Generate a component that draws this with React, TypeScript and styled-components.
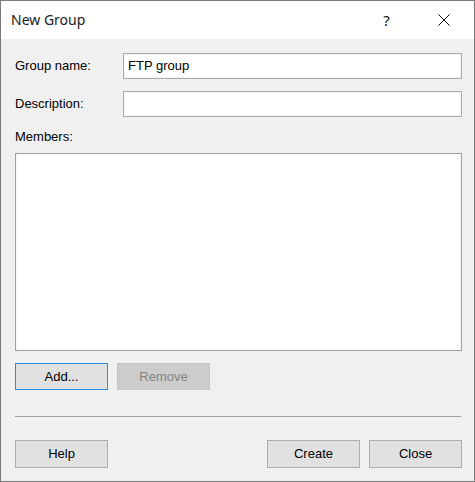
import React from "react";
import styled, { createGlobalStyle } from "styled-components";

const Global = createGlobalStyle`
  html, body { margin: 0; padding: 0; background: #ffffff; }
  body { font-family: "Liberation Sans", Arial, sans-serif; }
`;

const Window = styled.div`
  box-sizing: border-box;
  width: 475px;
  height: 482px;
  border: 1px solid #7a7a7a;
  display: flex;
  flex-direction: column;
  background: #f0f0f0;
`;

const TitleBar = styled.div`
  height: 38px;
  flex: none;
  background: #ffffff;
  display: flex;
  align-items: center;
  padding-left: 10px;
  padding-right: 2px;
`;

const Title = styled.div`
  flex: 1;
  font-family: "Noto Sans", "Open Sans", sans-serif;
  font-size: 14px;
  color: #1a1a1a;
  padding-bottom: 1px;
`;

const CaptionButton = styled.div`
  width: 57px;
  height: 38px;
  display: flex;
  align-items: center;
  justify-content: center;
  font-family: "Noto Sans", "Open Sans", sans-serif;
  font-size: 15px;
  color: #111;
`;

const Body = styled.div`
  flex: 1;
  display: flex;
  flex-direction: column;
  padding: 14px 12px 13px 14px;
`;

const FieldRow = styled.div<{ $gap?: number }>`
  display: grid;
  grid-template-columns: 108px 1fr;
  align-items: center;
  margin-top: ${(p) => p.$gap ?? 0}px;
`;

const Label = styled.label`
  font-size: 13px;
  color: #000;
  line-height: 16px;
`;

const TextBox = styled.div`
  box-sizing: border-box;
  height: 26px;
  background: #fff;
  border: 1px solid #acacac;
  box-shadow: inset 0 0 0 1px #f4f4f4;
  font-size: 13px;
  color: #000;
  padding: 4px 4px 0 4px;
  line-height: 16px;
`;

const MembersLabel = styled(Label)`
  display: block;
  margin-top: 12px;
  height: 16px;
`;

const ListBox = styled.div`
  box-sizing: border-box;
  margin-top: 8px;
  height: 198px;
  background: #fff;
  border: 1px solid #a0a0a0;
  box-shadow: inset 0 0 0 1px #f7f7f7;
`;

const ButtonRow = styled.div<{ $gap: number }>`
  display: flex;
  gap: 9px;
  margin-top: ${(p) => p.$gap}px;
`;

const Spacer = styled.div`
  flex: 1;
`;

const Button = styled.div<{ $h: number; $focus?: boolean; $disabled?: boolean }>`
  box-sizing: border-box;
  width: 93px;
  height: ${(p) => p.$h}px;
  display: flex;
  align-items: center;
  justify-content: center;
  font-size: 13px;
  background: ${(p) => (p.$disabled ? "#cccccc" : "#e1e1e1")};
  color: ${(p) => (p.$disabled ? "#838383" : "#000")};
  border-width: 1px;
  border-style: solid;
  border-color: ${(p) => (p.$focus ? "#2f8ae0" : p.$disabled ? "#c4c4c4" : "#adadad")};
  padding-bottom: 1px;
`;

const Separator = styled.div`
  margin-top: 26px;
  height: 1px;
  background: #a0a0a0;
  margin-right: 1px;
`;

export default function App() {
  return (
    <>
      <Global />
      <Window>
        <TitleBar>
          <Title>New Group</Title>
          <CaptionButton>?</CaptionButton>
          <CaptionButton>
            <svg width="12" height="12" viewBox="0 0 12 12">
              <path d="M0.5 0.5 L11.5 11.5 M11.5 0.5 L0.5 11.5" stroke="#111" strokeWidth="1" />
            </svg>
          </CaptionButton>
        </TitleBar>
        <Body>
          <FieldRow>
            <Label>Group name:</Label>
            <TextBox>FTP group</TextBox>
          </FieldRow>
          <FieldRow $gap={12}>
            <Label>Description:</Label>
            <TextBox />
          </FieldRow>
          <MembersLabel>Members:</MembersLabel>
          <ListBox />
          <ButtonRow $gap={12}>
            <Button $h={27} $focus>Add...</Button>
            <Button $h={27} $disabled>Remove</Button>
          </ButtonRow>
          <Separator />
          <ButtonRow $gap={23}>
            <Button $h={28}>Help</Button>
            <Spacer />
            <Button $h={28}>Create</Button>
            <Button $h={28}>Close</Button>
          </ButtonRow>
        </Body>
      </Window>
    </>
  );
}
